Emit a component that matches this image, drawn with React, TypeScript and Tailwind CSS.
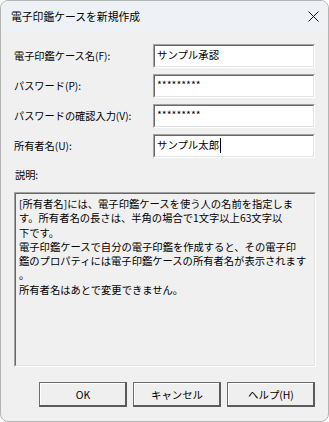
const font = { fontFamily: '"Noto Sans CJK JP", "Noto Sans", sans-serif' };

function Sunken({ className, children }: { className: string; children?: React.ReactNode }) {
  return (
    <div className={`border-t border-l border-t-[#a0a0a0] border-l-[#a0a0a0] border-b border-r border-b-white border-r-white ${className}`}>
      <div className="h-full border-t border-l border-t-[#696969] border-l-[#696969] border-b border-r border-b-[#e3e3e3] border-r-[#e3e3e3]">
        {children}
      </div>
    </div>
  );
}

function Field({ label, value, caret }: { label: string; value: string; caret?: boolean }) {
  return (
    <div className="flex items-center h-[24px]">
      <span className="w-[139px] text-[10.2px] leading-none pt-[1px]">{label}</span>
      <Sunken className="w-[162px] h-[24px]">
        <div className="h-full bg-white px-[2px] flex items-start pt-[2px]">
          <span className="text-[10.4px] leading-[14px]">{value}</span>
          {caret && <span className="w-px h-[15px] bg-black ml-[1px]" />}
        </div>
      </Sunken>
    </div>
  );
}

function Btn({ label }: { label: string }) {
  return (
    <div className="w-[88px] h-[25px] border border-[#6d6d6d] border-b-2 border-r-2 border-b-[#5a5a5a] border-r-[#5a5a5a] bg-[#efefef]">
      <div className="h-full border-t border-l border-white flex items-center justify-center text-[10.4px]">
        {label}
      </div>
    </div>
  );
}

const lines = [
  "[所有者名]には、電子印鑑ケースを使う人の名前を指定しま",
  "す。所有者名の長さは、半角の場合で1文字以上63文字以",
  "下です。",
  "電子印鑑ケースで自分の電子印鑑を作成すると、その電子印",
  "鑑のプロパティには電子印鑑ケースの所有者名が表示されます",
  "。",
  "所有者名はあとで変更できません。",
];

export default function App() {
  return (
    <div className="w-[329px] h-[422px] bg-white text-black" style={font}>
      <div className="w-full h-full rounded-[8px] border border-[#b4b4b4] overflow-hidden bg-[#f0f0f0] flex flex-col">
        <div className="h-[31px] bg-[#eef2f6] flex items-center justify-between pl-[10px] pr-[9px]">
          <span className="text-[10.8px]">電子印鑑ケースを新規作成</span>
          <svg width="11" height="11" viewBox="0 0 11 11" className="mb-[1px]">
            <path d="M0.5 0.5 L10.5 10.5 M10.5 0.5 L0.5 10.5" stroke="#111" strokeWidth="1" />
          </svg>
        </div>
        <div className="flex flex-col pl-[13px] pr-[13px] pt-[12px]">
          <div className="flex flex-col gap-[6px]">
            <Field label="電子印鑑ケース名(F):" value="サンプル承認" />
            <Field label="パスワード(P):" value="*********" />
            <Field label="パスワードの確認入力(V):" value="*********" />
            <Field label="所有者名(U):" value="サンプル太郎" caret />
          </div>
          <div className="mt-[10px] h-[14px] text-[10.2px] leading-[14px] pl-[1px]">説明:</div>
          <Sunken className="mt-[10px] w-[302px] h-[175px]">
            <div className="pl-[3px] pt-[3px] text-[10.3px] leading-[14.3px] whitespace-nowrap">
              {lines.map((l, i) => (
                <div key={i}>{l}</div>
              ))}
            </div>
          </Sunken>
          <div className="mt-[15px] flex justify-end gap-[6px]">
            <Btn label="OK" />
            <Btn label="キャンセル" />
            <Btn label="ヘルプ(H)" />
          </div>
        </div>
      </div>
    </div>
  );
}
